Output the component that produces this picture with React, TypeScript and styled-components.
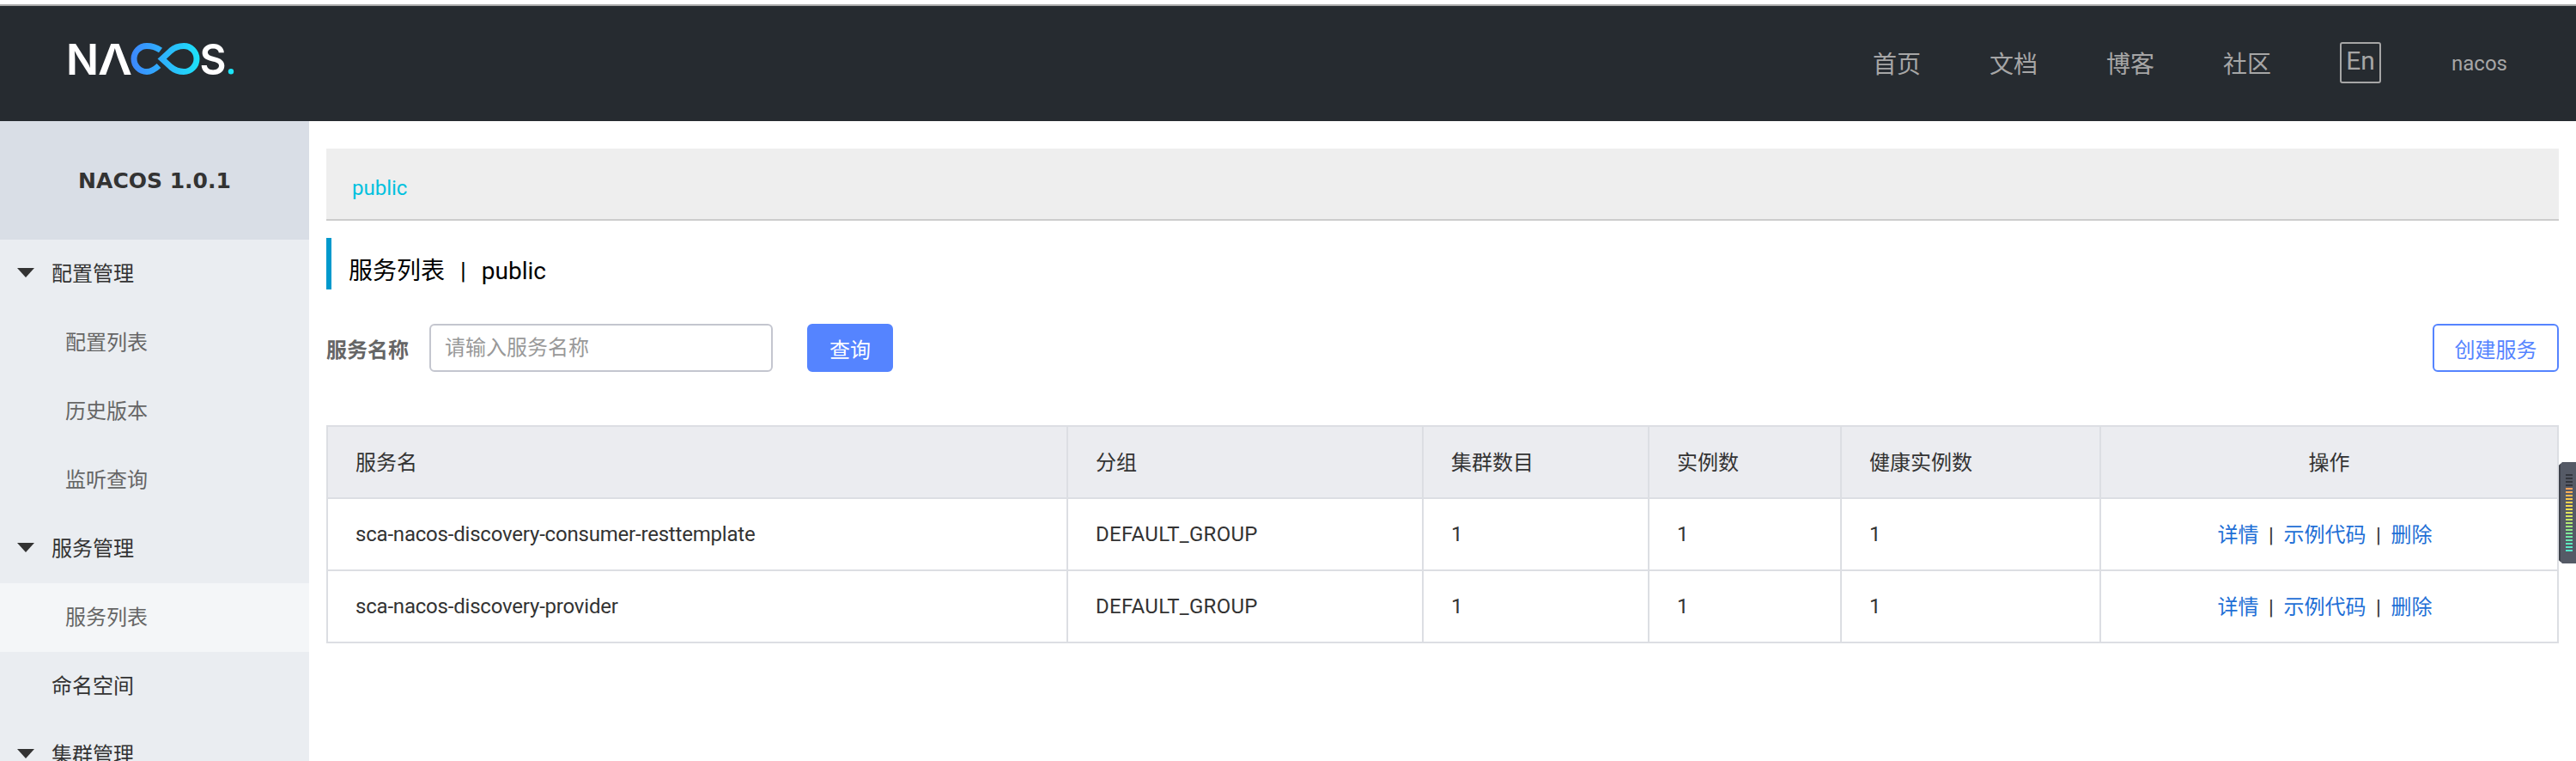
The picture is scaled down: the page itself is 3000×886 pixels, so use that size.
import React from "react";
import styled, { createGlobalStyle } from "styled-components";

const FONT = `"Roboto", "Noto Sans CJK SC", sans-serif`;

const GlobalStyle = createGlobalStyle`
  html, body {
    margin: 0;
    padding: 0;
    background: #fff;
  }
  body {
    font-family: ${FONT};
    color: #333;
  }
`;

const Page = styled.div`
  width: 3000px;
  height: 886px;
  position: relative;
  overflow: hidden;
  background: #fff;
`;

const TopStrip = styled.div`
  height: 5px;
  background: #fff;
  border-bottom: 2px solid #a9a9a9;
`;

const Header = styled.header`
  height: 134px;
  background: #262b30;
  display: flex;
  align-items: center;
  padding: 0 80px;
`;

const LogoSvg = styled.svg`
  width: 192px;
  height: 37px;
  display: block;
  margin-top: -11px;
  overflow: visible;
`;

const LogoLetter = styled.text`
  font-family: "Inter", sans-serif;
  font-weight: 600;
  font-size: 50px;
  fill: #fff;
`;

const Nav = styled.nav`
  margin-left: auto;
  display: flex;
  align-items: center;
  gap: 80px;
`;

const NavLink = styled.a`
  padding-top: 3px;
  font-size: 28px;
  line-height: 40px;
  color: #a6a6a6;
`;

const LangBox = styled.span`
  width: 48px;
  height: 48px;
  box-sizing: border-box;
  margin: 0 2px 2px 0;
  border: 2px solid #a6a6a6;
  border-radius: 3px;
  font-size: 30px;
  line-height: 40px;
  text-align: center;
  color: #a6a6a6;
`;

const UserName = styled.span`
  font-size: 24px;
  color: #a6a6a6;
`;

const Body = styled.div`
  display: flex;
  height: 745px;
`;

const Sidebar = styled.aside`
  width: 360px;
  flex: none;
  background: #eaedf1;
  overflow: hidden;
`;

const SideTitle = styled.div`
  height: 138px;
  background: #d9dee6;
  display: flex;
  align-items: center;
  justify-content: center;
  font-family: "DejaVu Sans", sans-serif;
  font-weight: 700;
  font-size: 25px;
  color: #333;
`;

const MenuRow = styled.div<{ $child?: boolean; $active?: boolean }>`
  height: 80px;
  box-sizing: border-box;
  padding-bottom: 5px;
  display: flex;
  align-items: center;
  padding-left: ${(p) => (p.$child ? "76px" : "60px")};
  font-size: 24px;
  color: ${(p) => (p.$child ? "#666" : "#333")};
  background: ${(p) => (p.$active ? "#f4f6f8" : "transparent")};
  position: relative;
`;

const Arrow = styled.i`
  position: absolute;
  left: 20px;
  top: 33px;
  width: 0;
  height: 0;
  border-left: 10px solid transparent;
  border-right: 10px solid transparent;
  border-top: 11px solid #333;
`;

const Main = styled.main`
  flex: 1;
  min-width: 0;
  padding: 32px 20px 0;
`;

const TabBar = styled.div`
  height: 84px;
  box-sizing: border-box;
  background: #eee;
  border-bottom: 2px solid #ccc;
  padding: 23px 30px 0;
  font-size: 24px;
  line-height: 46px;
  color: #00c1de;
`;

const PageTitle = styled.h1`
  margin: 20px 0 0;
  height: 60px;
  box-sizing: border-box;
  border-left: 6px solid #09c;
  padding: 11px 0 0 20px;
  font-size: 28px;
  font-weight: 400;
  line-height: 56px;
  color: #000;
  display: flex;
  gap: 18px;
`;

const FilterRow = styled.form`
  margin-top: 40px;
  height: 56px;
  display: flex;
  align-items: center;
`;

const FilterLabel = styled.label`
  width: 120px;
  flex: none;
  font-size: 24px;
  font-weight: 700;
  color: #666;
`;

const SearchInput = styled.input`
  width: 400px;
  height: 56px;
  box-sizing: border-box;
  border: 2px solid #c4c6cf;
  border-radius: 6px;
  padding: 0 16px;
  font-family: ${FONT};
  font-size: 24px;
  outline: none;
  &::placeholder {
    color: #999;
    opacity: 1;
  }
`;

const Button = styled.button<{ $ghost?: boolean }>`
  height: 56px;
  box-sizing: border-box;
  border: 2px solid #5584ff;
  border-radius: 6px;
  padding: 0;
  font-family: ${FONT};
  font-size: 24px;
  color: ${(p) => (p.$ghost ? "#5584ff" : "#fff")};
  background: ${(p) => (p.$ghost ? "#fff" : "#5584ff")};
  width: ${(p) => (p.$ghost ? "147px" : "100px")};
  margin-left: ${(p) => (p.$ghost ? "auto" : "40px")};
`;

const Table = styled.table`
  margin-top: 62px;
  width: 2598px;
  table-layout: fixed;
  border-collapse: collapse;
  font-size: 24px;
  color: #333;
`;

const HeadCell = styled.th<{ $center?: boolean }>`
  height: 84px;
  box-sizing: border-box;
  padding: 0 32px 4px;
  background: #ebecf0;
  border: 2px solid #dcdee3;
  font-weight: 400;
  text-align: ${(p) => (p.$center ? "center" : "left")};
`;

const Cell = styled.td<{ $spacing?: string }>`
  height: 84px;
  box-sizing: border-box;
  padding: 0 32px;
  border: 2px solid #dcdee3;
  letter-spacing: ${(p) => p.$spacing || "normal"};
`;

const ActionCell = styled.td`
  height: 84px;
  box-sizing: border-box;
  padding: 0 42px 4px 32px;
  border: 2px solid #dcdee3;
  text-align: center;
`;

const ActionLink = styled.a`
  color: #1f6fd6;
`;

const ActionSep = styled.span`
  margin: 0 11.6px;
  color: #333;
`;

const Meter = styled.div`
  position: absolute;
  right: 0;
  top: 538px;
  width: 20px;
  height: 118px;
  box-sizing: border-box;
  padding: 14px 4px 0 6px;
  background: #555a66;
  border-left: 2px solid #3d414a;
  clip-path: polygon(4px 0, 100% 0, 100% 100%, 4px 100%, 0 calc(100% - 4px), 0 4px);
  display: flex;
  flex-direction: column;
  gap: 2px;
`;

const MeterBar = styled.span<{ $color: string }>`
  height: 2px;
  flex: none;
  background: ${(p) => p.$color};
`;

const METER_COLORS = [
  "#33363d", "#33363d", "#33363d", "#33363d",
  "#f9a25a", "#f9ad55", "#f9bc50", "#f9c94f", "#f8d24e", "#f5dc50",
  "#eee255", "#e4e65a", "#d6e860", "#c6ea68", "#b4eb72", "#a2ec7e",
  "#8eec8a", "#7eeb98", "#70eaa6", "#66e9b2", "#5ee8bc", "#5ae8c4", "#56e8cc",
];

const menu = [
  { label: "配置管理", arrow: true },
  { label: "配置列表", child: true },
  { label: "历史版本", child: true },
  { label: "监听查询", child: true },
  { label: "服务管理", arrow: true },
  { label: "服务列表", child: true, active: true },
  { label: "命名空间" },
  { label: "集群管理", arrow: true },
];

const services = [
  "sca-nacos-discovery-consumer-resttemplate",
  "sca-nacos-discovery-provider",
];

const columnWidths = [862, 414, 263, 224, 302, 533];

function Logo() {
  return (
    <LogoSvg viewBox="0 0 192 37">
      <defs>
        <linearGradient id="loop" x1="72" x2="154" y1="0" y2="0" gradientUnits="userSpaceOnUse">
          <stop offset="0" stopColor="#3d86ff" />
          <stop offset="1" stopColor="#1ce4f8" />
        </linearGradient>
      </defs>
      <LogoLetter x="-3" y="37" textLength="38" lengthAdjust="spacingAndGlyphs">N</LogoLetter>
      <LogoLetter x="34" y="37" textLength="40" lengthAdjust="spacingAndGlyphs">Λ</LogoLetter>
      <g fill="none" stroke="url(#loop)" strokeWidth="7">
        <path d="M107 8.5C102 5 96 3.5 91 3.5A15 15 0 0 0 91 33.5C96 33.5 100 31 105 26.5" />
        <path d="M108.7 18.5L119 9C123 5.5 128 3.5 134 3.5A15 15 0 0 1 134 33.5C128 33.5 123 31.5 119 28Z" />
      </g>
      <LogoLetter x="152.5" y="37" textLength="31" lengthAdjust="spacingAndGlyphs">S</LogoLetter>
      <circle cx="189" cy="33.3" r="3.2" fill="#1ce4f8" />
    </LogoSvg>
  );
}

export default function App() {
  return (
    <Page>
      <GlobalStyle />
      <TopStrip />
      <Header>
        <Logo />
        <Nav>
          <NavLink>首页</NavLink>
          <NavLink>文档</NavLink>
          <NavLink>博客</NavLink>
          <NavLink>社区</NavLink>
          <LangBox>En</LangBox>
          <UserName>nacos</UserName>
        </Nav>
      </Header>
      <Body>
        <Sidebar>
          <SideTitle>NACOS 1.0.1</SideTitle>
          {menu.map((item) => (
            <MenuRow key={item.label} $child={item.child} $active={item.active}>
              {item.arrow && <Arrow />}
              {item.label}
            </MenuRow>
          ))}
        </Sidebar>
        <Main>
          <TabBar>public</TabBar>
          <PageTitle>
            <span>服务列表</span>
            <span>|</span>
            <span>public</span>
          </PageTitle>
          <FilterRow>
            <FilterLabel>服务名称</FilterLabel>
            <SearchInput placeholder="请输入服务名称" />
            <Button type="button">查询</Button>
            <Button type="button" $ghost>创建服务</Button>
          </FilterRow>
          <Table>
            <colgroup>
              {columnWidths.map((w, i) => (
                <col key={i} width={w} />
              ))}
            </colgroup>
            <thead>
              <tr>
                <HeadCell>服务名</HeadCell>
                <HeadCell>分组</HeadCell>
                <HeadCell>集群数目</HeadCell>
                <HeadCell>实例数</HeadCell>
                <HeadCell>健康实例数</HeadCell>
                <HeadCell $center>操作</HeadCell>
              </tr>
            </thead>
            <tbody>
              {services.map((name) => (
                <tr key={name}>
                  <Cell $spacing="-0.2px">{name}</Cell>
                  <Cell $spacing="0.3px">DEFAULT_GROUP</Cell>
                  <Cell>1</Cell>
                  <Cell>1</Cell>
                  <Cell>1</Cell>
                  <ActionCell>
                    <ActionLink>详情</ActionLink>
                    <ActionSep>|</ActionSep>
                    <ActionLink>示例代码</ActionLink>
                    <ActionSep>|</ActionSep>
                    <ActionLink>删除</ActionLink>
                  </ActionCell>
                </tr>
              ))}
            </tbody>
          </Table>
        </Main>
      </Body>
      <Meter>
        {METER_COLORS.map((c, i) => (
          <MeterBar key={i} $color={c} />
        ))}
      </Meter>
    </Page>
  );
}
